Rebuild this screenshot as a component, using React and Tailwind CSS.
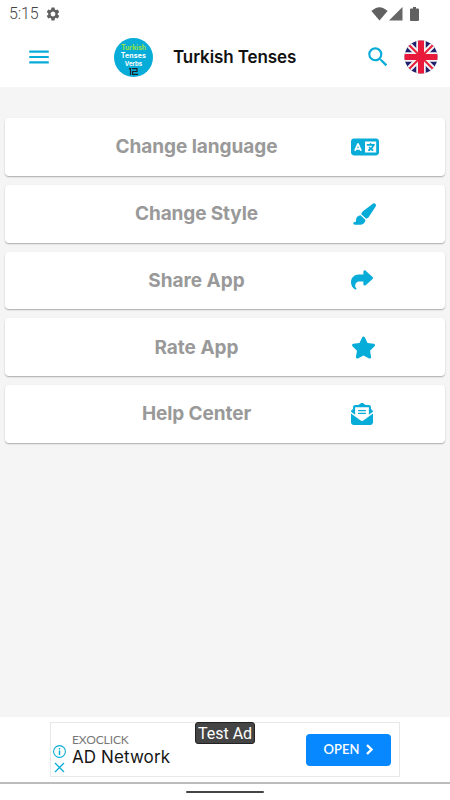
import { FaLanguage, FaPaintbrush, FaShare, FaStar, FaEnvelopeOpenText } from "react-icons/fa6";
import { MdSettings, MdMenu, MdSearch } from "react-icons/md";

const items = [
  { label: "Change language", icon: FaLanguage, size: "w-[28px] h-[28px]", text: "tracking-[-0.04px]" },
  { label: "Change Style", icon: FaPaintbrush, size: "w-[24px] h-[24px] mr-[2px]", text: "tracking-[-0.12px]" },
  { label: "Share App", icon: FaShare, size: "w-[22px] h-[22px] mr-[5px]", text: "tracking-[-0.02px]" },
  { label: "Rate App", icon: FaStar, size: "w-[25px] h-[25px] mr-[2px]", text: "tracking-[0px]" },
  { label: "Help Center", icon: FaEnvelopeOpenText, size: "w-[22px] h-[22px] mr-[5px]", text: "tracking-[-0.1px]" },
];

function StatusBar() {
  return (
    <div className="flex h-[27px] items-center pl-[9px] pr-[31px] text-[#606060]">
      <span className="font-[Roboto] text-[16px] leading-none font-light tracking-[-0.1px] text-[#444]">5:15</span>
      <MdSettings className="ml-[6px] h-4 w-4" />

      <div className="ml-auto flex items-center">
        <svg className="h-[14px] w-[17px]" viewBox="0 0 17 14">
          <path d="M.4 4Q8.500-3.600 16.600 4L8.500 13.500Z" fill="#606060" />
        </svg>
        <svg className="ml-[1px] h-[14px] w-[14px]" viewBox="0 0 14 14">
          <path d="M0 13.500L13.500 0V13.500Z" fill="#666" />
        </svg>
        <svg className="ml-[7px] h-[14px] w-[9px]" viewBox="0 0 9 14">
          <path d="M3 0H6V1.500H8Q9 1.500 9 2.500V13Q9 14 8 14H1Q0 14 0 13V2.500Q0 1.500 1 1.500H3Z" fill="#606060" />
        </svg>
      </div>
    </div>
  );
}

function Flag() {
  return (
    <svg className="h-[34px] w-[34px]" viewBox="0 0 34 34">
      <clipPath id="flag">
        <circle cx="17" cy="17" r="16.500" />
      </clipPath>
      <g clipPath="url(#flag)">
        <path d="M0 0H34V34H0Z" fill="#20206e" />
        <path d="M0 0L34 34M34 0L0 34" stroke="#f4f2f2" strokeWidth="6" />
        <path d="M17 0V34M0 17H34" stroke="#f4f2f2" strokeWidth="9.500" />
        <path d="M4 4L14 14M30 30L20 20M30 4L20 14M4 30L14 20" stroke="#e8213a" strokeWidth="2" />
        <path d="M17 0V34M0 17H34" stroke="#e8193a" strokeWidth="6" />
      </g>
    </svg>
  );
}

function Header() {
  return (
    <header className="flex h-[60px] items-center pr-[12px] pl-[26px]">
      <MdMenu className="h-[26px] w-[26px] text-[#08acd8]" />

      {/* App logo */}
      <div className="ml-[62px] flex h-[39px] w-[39px] flex-col items-center rounded-full bg-[#08acd8] pt-[6px] font-[Inter] text-[7px] leading-[8px] font-bold text-white">
        <span className="tracking-[-0.1px] text-[#8ee048]">Turkish</span>
        <span className="tracking-[0.1px]">Tenses</span>
        <span className="text-[6px] leading-[7px]">Verbs</span>
        <svg className="mt-[1px] h-[7px] w-[9px]" viewBox="0 0 9 7" fill="none" stroke="#182329" strokeWidth="1.200">
          <path d="M0 .6H1.500V7M3 .6H8V3.500H3.600V6.400H9" />
        </svg>
      </div>

      <h1 className="mt-[1px] ml-[20px] font-[Inter] text-[17px] font-semibold tracking-[-0.1px] whitespace-nowrap text-[#111]">Turkish Tenses</h1>

      <MdSearch className="ml-auto h-[26px] w-[26px] text-[#08acd8]" />
      <div className="ml-[13px]">
        <Flag />
      </div>
    </header>
  );
}

function MenuCard({ item }) {
  const Icon = item.icon;

  return (
    <div className="flex h-[57.800px] items-center rounded-[4px] bg-white pl-[46px] shadow-[0_1px_1.500px_rgba(0,0,0,0.3)]">
      <span className={`mt-[1px] w-[291px] text-center font-[Inter] text-[19px] font-bold whitespace-nowrap text-[#999] ${item.text}`}>
        {item.label}
      </span>
      <div className="ml-[6.500px] flex w-[32px] items-center justify-center">
        <Icon className={`text-[#08acd8] ${item.size}`} />
      </div>
    </div>
  );
}

function AdBanner() {
  return (
    <div className="flex h-[67px] justify-center border-b-2 border-[#bcbcbc] bg-white pt-[5px]">
      <div className="relative flex h-[55px] w-[350px] items-center border border-[#e8e8e8] pr-[8px] pl-[1px]">
        <div className="mt-[19px] flex w-[14px] flex-col items-center gap-[4px]">
          <svg className="h-[13px] w-[13px]" viewBox="0 0 13 13" fill="none" stroke="#08acd8">
            <circle cx="6.500" cy="6.500" r="5.900" strokeWidth="1.100" />
            <path d="M6.500 5.500V10M6.500 3V4.500" strokeWidth="1.500" />
          </svg>
          <svg className="h-[11px] w-[11px]" viewBox="0 0 11 11" fill="none" stroke="#08acd8" strokeWidth="1.300">
            <path d="M1 1L10 10M10 1L1 10" />
          </svg>
        </div>

        <div className="ml-[6px] font-[Lato] whitespace-nowrap">
          <p className="text-[12px] leading-[14px] tracking-[-0.1px] text-[#777]">EXOCLICK</p>
          <p className="font-[Inter] text-[17px] leading-[20px] tracking-[0.1px] text-[#151515]">AD Network</p>
        </div>

        <button className="ml-auto flex h-[32px] w-[85px] items-center justify-center gap-[7px] rounded-[4px] bg-[#0788ff] font-[Lato] text-[13px] font-semibold text-white">
          OPEN
          <svg className="h-[11px] w-[7px]" viewBox="0 0 7 11" fill="none" stroke="white" strokeWidth="2.400">
            <path d="M1 1L5.500 5.500L1 10" />
          </svg>
        </button>

        <span className="absolute top-[-1px] left-[144px] flex h-[22px] w-[60px] items-center justify-center rounded-[3px] border border-[#222] bg-[#444] pt-[2px] font-[Roboto] text-[16px] whitespace-nowrap text-white">
          Test Ad
        </span>
      </div>
    </div>
  );
}

export default function App() {
  return (
    <div className="flex h-[800px] w-[450px] flex-col overflow-hidden bg-white">
      <StatusBar />
      <Header />

      <main className="flex flex-1 flex-col gap-[9px] bg-[#f5f5f5] px-[5px] pt-[31px]">
        {items.map((item) => (
          <MenuCard key={item.label} item={item} />
        ))}
      </main>

      <AdBanner />

      {/* Gesture bar */}
      <div className="flex h-[16px] justify-center pt-[7px]">
        <div className="h-[2px] w-[78px] rounded-full bg-[#444]" />
      </div>
    </div>
  );
}
